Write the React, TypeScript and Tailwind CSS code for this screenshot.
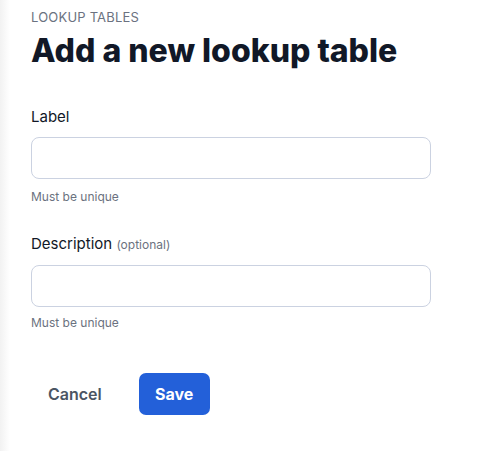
export default function App() {
  return (
    <div className="flex min-h-[451px] w-full bg-white" style={{ fontFamily: "Inter, 'Noto Sans', sans-serif" }}>
      <div className="w-[10px] shrink-0 bg-gradient-to-r from-[#f2f2f2] to-white" />
      <div className="flex flex-col pl-[21px] pt-[9px]">
        <div className="text-[13px] leading-[16px] uppercase tracking-[0.2px] text-[#6b7280]">Lookup tables</div>
        <h1 className="mt-[8px] text-[32px] leading-[36px] font-extrabold text-[#111827] tracking-[0px]">Add a new lookup table</h1>
        <label className="mt-[38px] text-[15px] leading-[20px] font-normal text-[#111827]">Label</label>
        <input className="mt-[10px] h-[42px] w-[400px] rounded-[8px] border border-[#cbd2e1] bg-white px-3 outline-none" />
        <div className="mt-[10px] text-[12px] leading-[16px] text-[#6b7280]">Must be unique</div>
        <label className="mt-[29px] text-[15px] leading-[20px] font-normal text-[#111827]">
          Description <span className="text-[12px] font-normal text-[#6b7280]">(optional)</span>
        </label>
        <input className="mt-[10px] h-[42px] w-[400px] rounded-[8px] border border-[#cbd2e1] bg-white px-3 outline-none" />
        <div className="mt-[8px] text-[12px] leading-[16px] text-[#6b7280]">Must be unique</div>
        <div className="mt-[42px] flex items-center">
          <button className="h-[42px] px-[17px] text-[16px] font-semibold text-[#4b5563]">Cancel</button>
          <button className="ml-[20px] h-[42px] w-[71px] rounded-[7px] bg-[#2360d9] text-[16px] font-bold text-white">Save</button>
        </div>
      </div>
    </div>
  );
}
